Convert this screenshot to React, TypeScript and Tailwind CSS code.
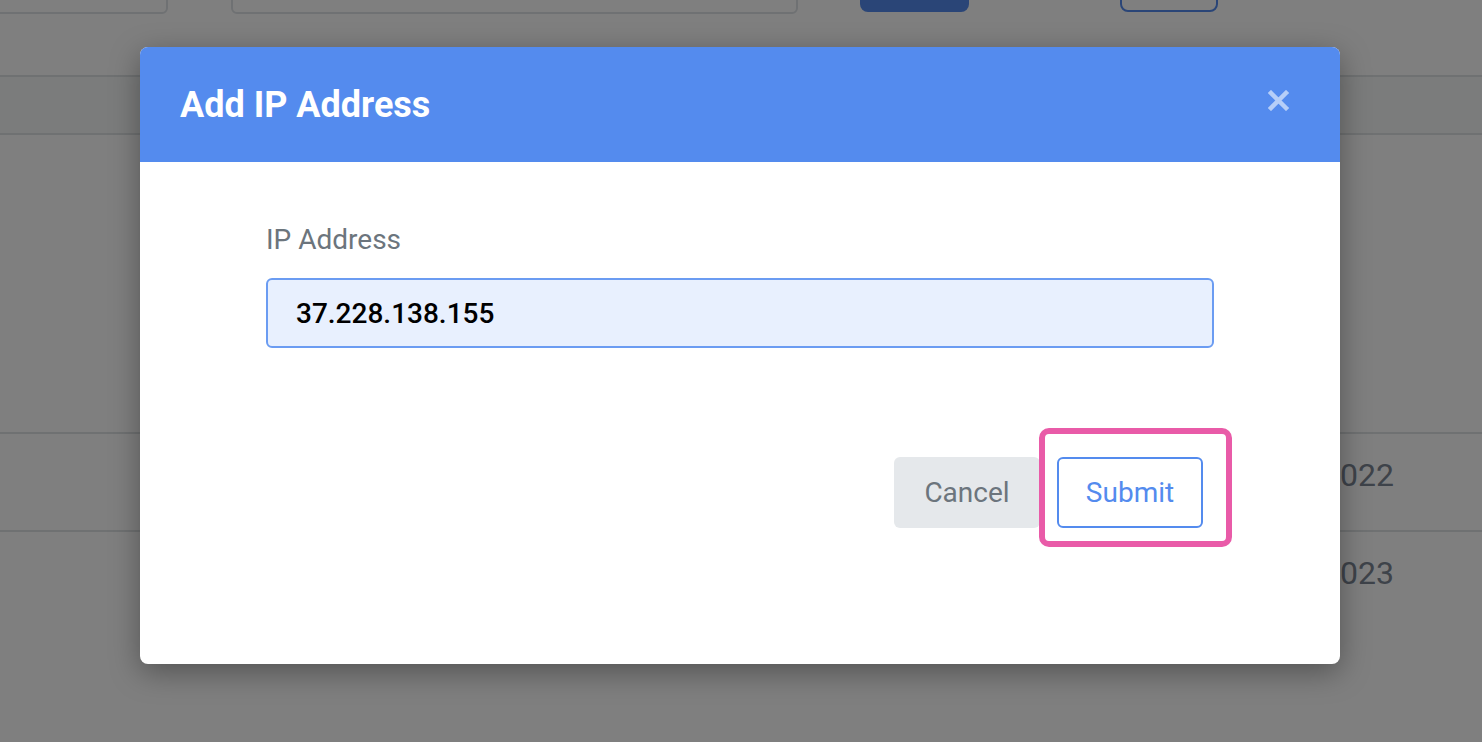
import React from "react";

// Underlying page (dimmed by the modal backdrop)
function PageBehind() {
  return (
    <div className="flex flex-col">
      {/* Toolbar — mostly scrolled off the top */}
      <div className="flex h-[75px] items-start">
        <div className="-mt-[40px] ml-[-20px] h-[54px] w-[188px] rounded-[6px] border-2 border-[#dee2e6] bg-white" />
        <div className="-mt-[40px] ml-[63px] h-[54px] w-[567px] rounded-[6px] border-2 border-[#dee2e6] bg-white" />
        <div className="-mt-[40px] ml-[62px] h-[52px] w-[109px] rounded-[8px] bg-[#548bee]" />
        <div className="-mt-[40px] ml-[151px] h-[52px] w-[98px] rounded-[8px] border-2 border-[#548bee] bg-white" />
      </div>

      {/* Table header */}
      <div className="h-[60px] border-y-2 border-[#dfe3e5] bg-[#f7f8f9]" />

      {/* Table rows */}
      <div className="h-[299px] border-b-2 border-[#dfe3e5]" />
      <div className="grid h-[98px] grid-cols-[1fr_160px] border-b-2 border-[#dfe3e5] pt-[17px] text-[32px] leading-[48px] text-[#7d8794]">
        <div />
        <div>2022</div>
      </div>
      <div className="grid h-[98px] grid-cols-[1fr_160px] pt-[17px] text-[32px] leading-[48px] text-[#7d8794]">
        <div />
        <div>2023</div>
      </div>
    </div>
  );
}

function CloseIcon() {
  return (
    <svg width="21" height="21" viewBox="0 0 21 21" aria-hidden="true">
      <path
        d="M3 3L18 18M18 3L3 18"
        stroke="#b6cef8"
        strokeWidth="4.5"
        strokeLinecap="square"
      />
    </svg>
  );
}

function AddIpModal() {
  return (
    <div className="ml-[140px] w-[1200px] overflow-hidden rounded-[8px] bg-white shadow-[0_8px_30px_rgba(0,0,0,0.35)]">
      {/* Header */}
      <div className="flex h-[115px] items-center justify-between bg-[#548bee] pl-[40px] pr-[51px]">
        <h2 className="text-[36px] font-bold leading-none text-white">Add IP Address</h2>
        <button type="button" className="mb-[9px] flex items-center justify-center">
          <CloseIcon />
        </button>
      </div>

      {/* Body */}
      <div className="px-[126px] pt-[58px]">
        <label className="mb-[18px] block text-[28px] leading-[40px] text-[#6c757d]">IP Address</label>
        <input
          readOnly
          value="37.228.138.155"
          className="block h-[70px] w-full rounded-[6px] border-2 border-[#6b9cf2] bg-[#e8f0fe] px-[28px] text-[28px] font-medium text-black outline-none"
        />
      </div>

      {/* Footer */}
      <div className="flex justify-end gap-[17px] pb-[136px] pr-[137px] pt-[109px]">
        <button
          type="button"
          className="h-[71px] w-[146px] rounded-[6px] bg-[#e5e8eb] text-[28px] text-[#6c757d]"
        >
          Cancel
        </button>
        <button
          type="button"
          className="relative h-[71px] w-[146px] rounded-[6px] border-2 border-[#548bee] bg-white text-[28px] text-[#548bee]"
        >
          Submit
          {/* highlight annotation */}
          <span className="pointer-events-none absolute -bottom-[21px] -left-[20px] -right-[31px] -top-[31px] rounded-[10px] border-[6px] border-[#e95ba8]" />
        </button>
      </div>
    </div>
  );
}

export default function App() {
  return (
    <div className="relative h-[742px] w-full overflow-hidden bg-white font-['Roboto','Liberation_Sans',sans-serif]">
      <PageBehind />
      <div className="absolute inset-0 bg-black/50 pt-[47px]">
        <AddIpModal />
      </div>
    </div>
  );
}
